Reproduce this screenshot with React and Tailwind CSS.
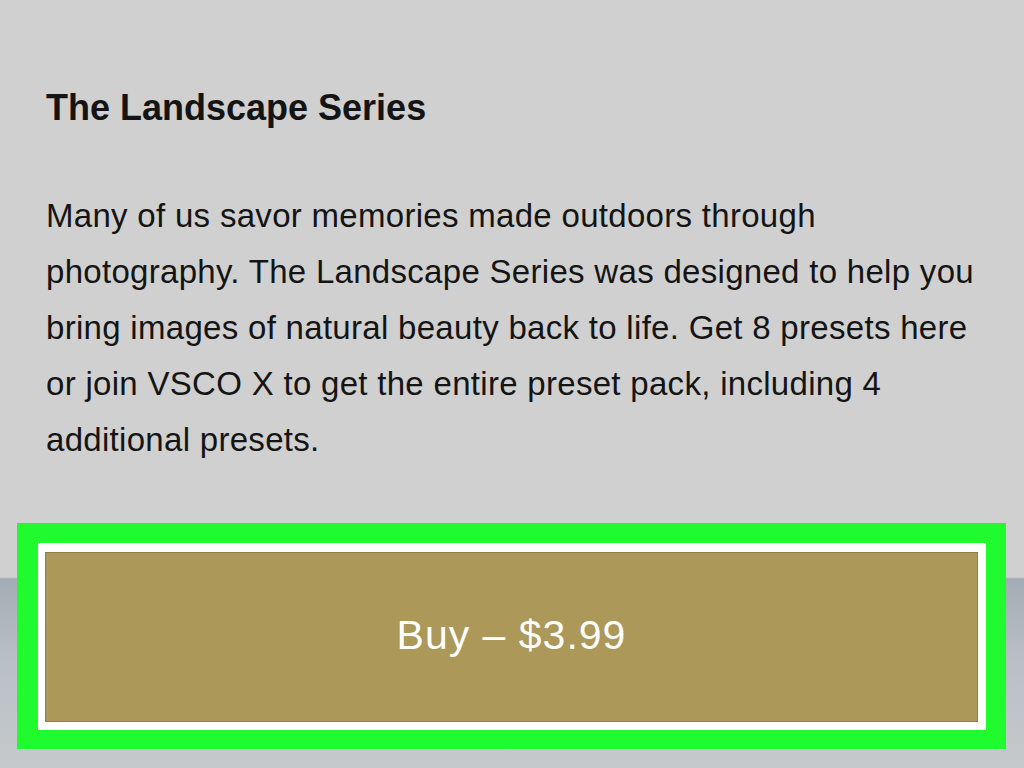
export default function App() {
  return (
    <div
      className="w-[1024px] h-[768px] overflow-hidden flex flex-col bg-[linear-gradient(180deg,#d0d0d0_0px,#d0d0d0_577px,#a3acb5_579px,#b9c0c6_660px,#c6c9cb_768px)]"
      style={{ fontFamily: '"Liberation Sans", Arial, sans-serif' }}
    >
      <div className="px-[46px] pt-[88px]">
        <h1 className="text-[36px] leading-[40px] font-bold text-[#141414]">The Landscape Series</h1>
        <p className="mt-[60px] text-[33px] leading-[56px] tracking-[0.3px] text-[#141414]">
          Many of us savor memories made outdoors through
          <br />
          photography. The Landscape Series was designed to help you
          <br />
          bring images of natural beauty back to life. Get 8 presets here
          <br />
          or join VSCO X to get the entire preset pack, including 4
          <br />
          additional presets.
        </p>
      </div>
      <div className="mt-auto mb-[19px] ml-[17px] mr-[18px] h-[226px] bg-[#1ffb2f] pt-[20px] pb-[19px] pl-[21px] pr-[20px] flex">
        <div className="flex-1 bg-white pt-[9px] pb-[8px] pl-[7px] pr-[8px] flex">
          <button className="flex-1 bg-[#ac9859] border border-[#937f44] flex items-center justify-center text-white text-[41px] tracking-[1px] pb-[2px]">
            Buy – $3.99
          </button>
        </div>
      </div>
    </div>
  );
}
